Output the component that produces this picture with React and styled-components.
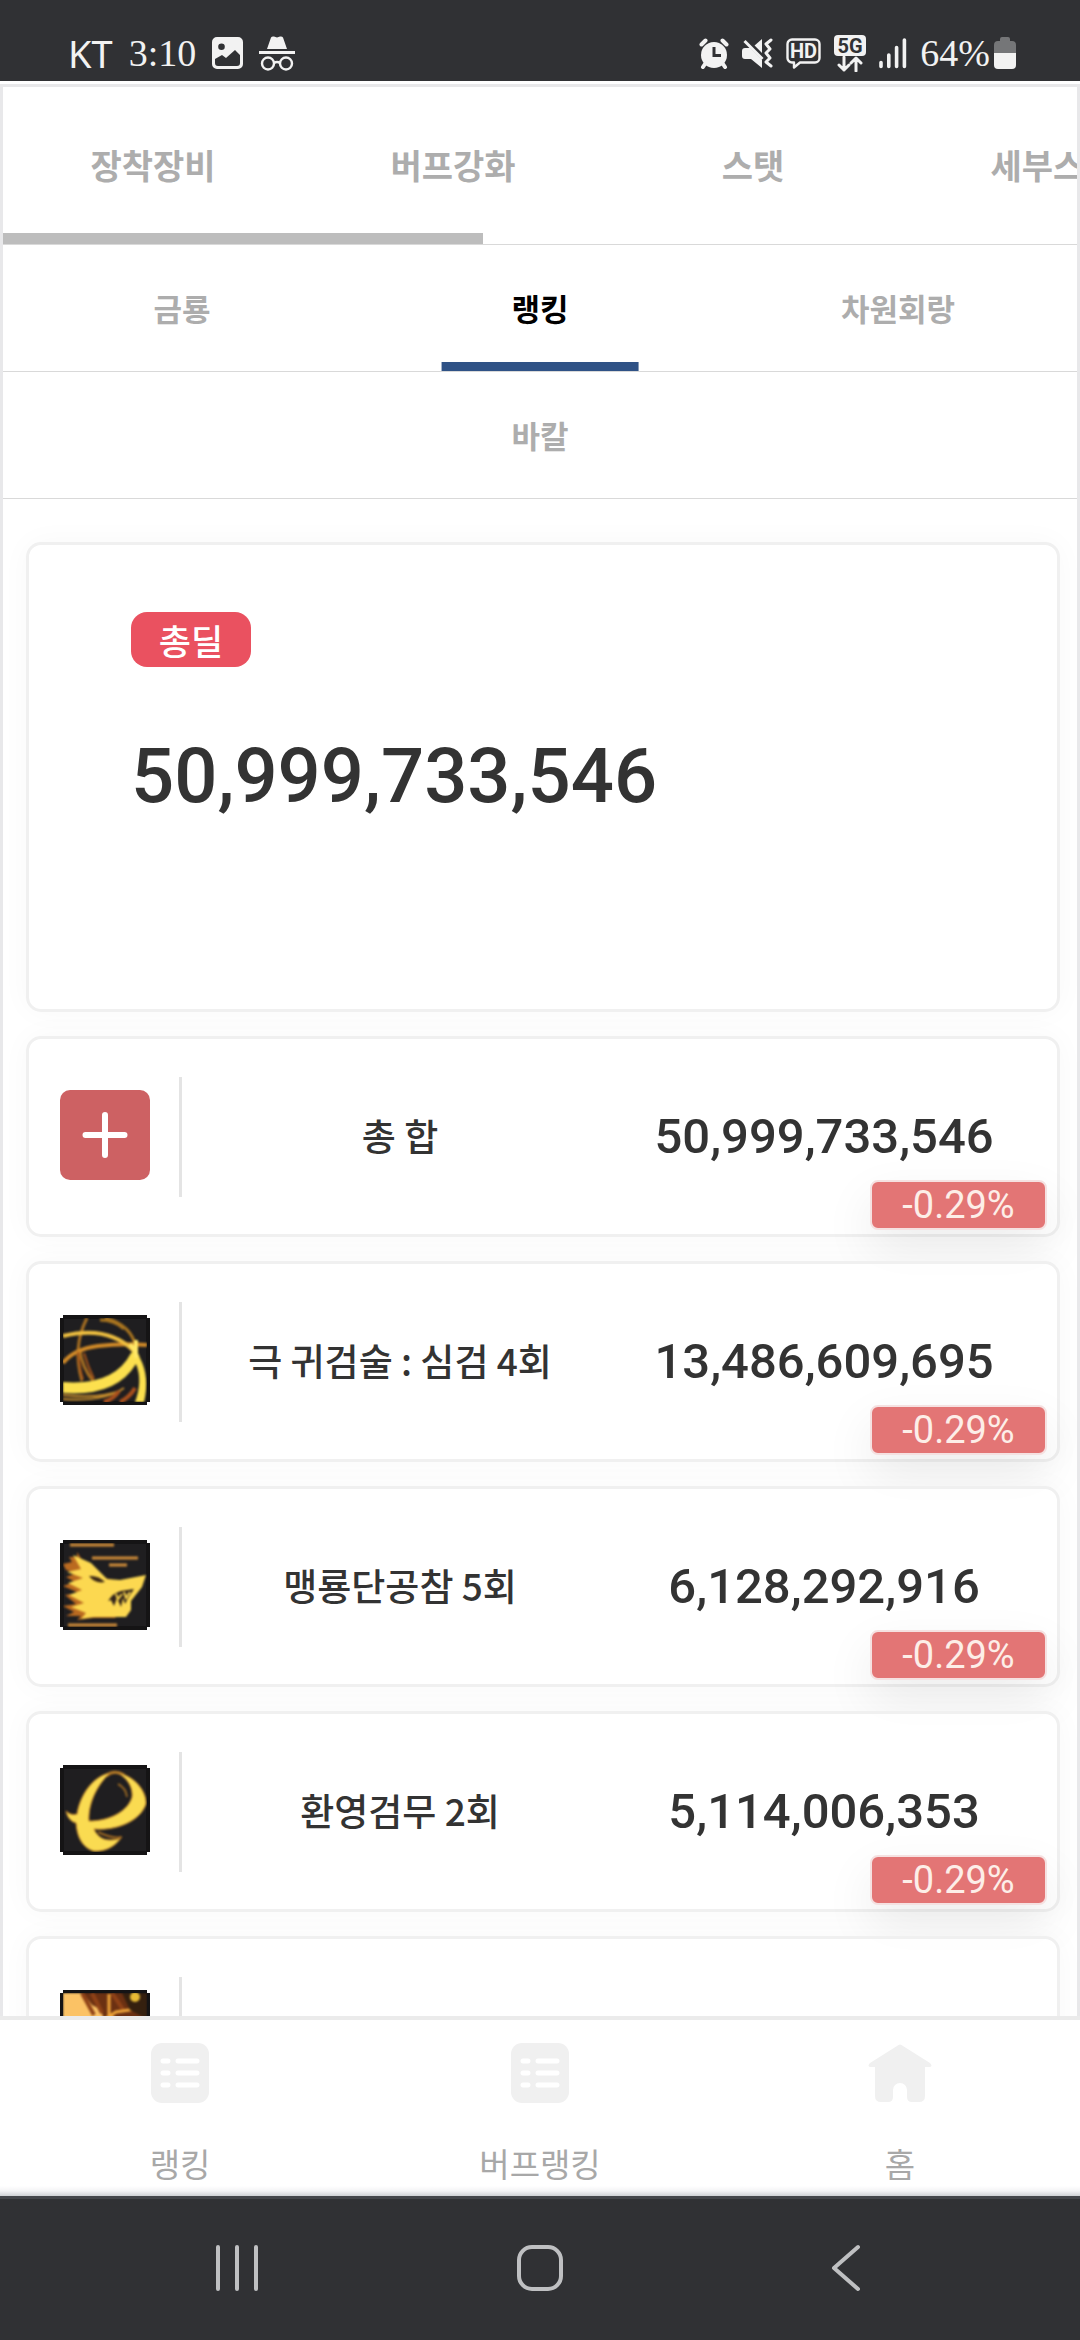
import React from 'react';
import styled, { createGlobalStyle } from 'styled-components';

const GlobalStyle = createGlobalStyle`
  * {
    box-sizing: border-box;
  }

  body {
    margin: 0;
    background: #fff;
    color: #333;
    font-family: 'Noto Sans CJK KR', sans-serif;
  }
`;

const Screen = styled.div`
  display: flex;
  flex-direction: column;
  height: 100vh;
`;

const StatusBar = styled.header`
  flex: none;
  display: flex;
  justify-content: space-between;
  align-items: flex-end;
  height: 81px;
  padding: 0 64px 9px 68px;
  background: #303134;
  color: #f2f2f2;
`;

const StatusGroup = styled.div`
  display: flex;
  align-items: center;
  height: 38px;
  gap: ${({ $gap }) => $gap}px;

  svg {
    display: block;
    flex: none;
  }
`;

const Carrier = styled.span`
  font-family: 'Noto Sans', sans-serif;
  font-size: 38px;
  line-height: 38px;
`;

const StatusText = styled.span`
  font-family: 'Liberation Serif', serif;
  font-size: 38px;
  line-height: 38px;
`;

const Page = styled.main`
  flex: 1;
  min-height: 0;
  display: flex;
  flex-direction: column;
  overflow: hidden;
  border: 3px solid #e8e8ea;
  border-bottom: none;
  margin-top: 3px;
`;

const TabStrip = styled.nav`
  flex: none;
  position: relative;
  display: flex;
  overflow: hidden;
  height: 158px;
  border-bottom: 1px solid #d9d9d9;
`;

const ScrollThumb = styled.span`
  position: absolute;
  left: 0;
  bottom: 0;
  width: 480px;
  height: 11px;
  background: #bdbdbd;
`;

const MainTab = styled.button`
  flex: none;
  width: 300px;
  padding: 0 0 2px;
  border: none;
  background: none;
  color: #adadad;
  font-family: inherit;
  font-size: 34px;
  font-weight: 700;
  cursor: pointer;
`;

const SubTabs = styled.nav`
  flex: none;
  display: flex;
  justify-content: center;
  border-bottom: 1px solid #d9d9d9;
`;

const SubTab = styled.button`
  position: relative;
  width: 33.33%;
  height: 126px;
  padding: 0 0 2px;
  border: none;
  background: none;
  color: ${({ $active }) => ($active ? '#000' : '#adadad')};
  font-family: inherit;
  font-size: 31px;
  font-weight: 700;
  cursor: pointer;

  &::after {
    content: '';
    position: absolute;
    left: 50%;
    bottom: 0;
    width: 55%;
    height: 9px;
    transform: translateX(-50%);
    background: ${({ $active }) => ($active ? '#2f5286' : 'transparent')};
  }
`;

const Content = styled.div`
  flex: 1;
  min-height: 0;
  overflow: hidden;
  display: flex;
  flex-direction: column;
  gap: 24px;
  padding: 43px 17px 0 23px;
`;

const SummaryCard = styled.section`
  flex: none;
  min-height: 470px;
  padding: 67px 102px;
  border: 3px solid #f0f0f0;
  border-radius: 15px;
  background: #fff;
  box-shadow: 0 0 30px rgba(0, 0, 0, 0.03);
`;

const SummaryLabel = styled.h1`
  display: flex;
  align-items: center;
  justify-content: center;
  width: 120px;
  height: 55px;
  margin: 0;
  border-radius: 16px;
  background: #ea5160;
  color: #fff;
  font-size: 35px;
  font-weight: 500;
  line-height: 55px;
`;

const SummaryValue = styled.p`
  margin: 64px 0 0;
  font-family: Roboto, sans-serif;
  font-size: 76px;
  font-weight: 500;
  line-height: 90px;
`;

const SkillList = styled.ul`
  flex: none;
  display: flex;
  flex-direction: column;
  gap: 24px;
  margin: 0;
  padding: 0;
  list-style: none;
`;

const SkillRow = styled.li`
  position: relative;
  display: grid;
  grid-template-columns: 150px 3px 18fr 17fr;
  align-items: center;
  justify-items: center;
  height: 201px;
  padding-right: 27px;
  border: 3px solid #f0f0f0;
  border-radius: 15px;
  background: rgba(255, 255, 255, 0.7);
  box-shadow: 0 0 30px rgba(0, 0, 0, 0.03);
`;

const SkillIcon = styled.div`
  justify-self: start;
  width: 90px;
  height: 90px;
  margin: 0 0 4px 31px;

  svg {
    display: block;
  }
`;

const SkillArt = styled.g`
  filter: blur(1px);
`;

const Divider = styled.div`
  width: 3px;
  height: 120px;
  background: #e4e4e4;
`;

const SkillName = styled.span`
  padding-bottom: 4px;
  font-size: 37px;
  font-weight: 500;
  white-space: nowrap;
`;

const SkillDamage = styled.span`
  font-family: Roboto, sans-serif;
  font-size: 49px;
  font-weight: 500;
  line-height: 56px;
`;

const DiffBadge = styled.span`
  position: absolute;
  right: 10px;
  bottom: 4px;
  display: flex;
  align-items: center;
  justify-content: center;
  width: 177px;
  height: 50px;
  border: 2px solid #f5e1e1;
  border-radius: 8px;
  background: #e37575;
  box-shadow: 0 20px 50px rgba(0, 0, 0, 0.08);
  color: #fdeee8;
  font-family: Roboto, sans-serif;
  font-size: 38px;
  line-height: 46px;
`;

const BottomNav = styled.nav`
  flex: none;
  display: grid;
  grid-template-columns: repeat(3, 1fr);
  height: 180px;
  border-top: 4px solid #ebebeb;
  background: linear-gradient(#fff, #fff 166px, #f3f3f5 171px, #cfd1d5 176px);
`;

const NavLink = styled.a`
  display: flex;
  flex-direction: column;
  align-items: center;
  gap: 36px;
  padding-top: 23px;
  color: #a8a8a8;
  font-size: 33px;
  line-height: 48px;
  text-decoration: none;
`;

const SystemBar = styled.footer`
  flex: none;
  display: flex;
  justify-content: space-between;
  align-items: center;
  height: 144px;
  padding: 0 214px 4px;
  border-top: 3px solid #44464b;
  background: #303134;
`;

const SystemButton = styled.button`
  width: 48px;
  height: 48px;
  padding: 0;
  border: none;
  background: none;
  cursor: pointer;

  svg {
    display: block;
    fill: none;
    stroke: #bfc0c2;
    stroke-width: 4;
    stroke-linecap: round;
    stroke-linejoin: round;
  }
`;

const ImageIcon = () => (
  <svg width="31" height="32" viewBox="0 0 31 32">
    <path
      fill="#f2f2f2"
      fillRule="evenodd"
      d="M5 0h21a5 5 0 0 1 5 5v22a5 5 0 0 1-5 5H5a5 5 0 0 1-5-5V5a5 5 0 0 1 5-5zM9.500 6.500a3.300 3.300 0 1 0 0 6.600a3.300 3.300 0 0 0 0-6.600zM3 22v4a3 3 0 0 0 3 3h19a3 3 0 0 0 3-3v-8l-5-5l-9 8l-4-3z"
    />
  </svg>
);

const IncognitoIcon = () => (
  <svg width="36" height="35" viewBox="0 0 36 35" fill="none" stroke="#f2f2f2">
    <path fill="#f2f2f2" stroke="none" d="M12 1.500Q13 0 15 .5l3 1l3-1q2-.5 3 1L28 13H8z" />
    <path strokeWidth="3" d="M0 16.500h36" />
    <circle cx="9" cy="27.500" r="6" strokeWidth="2.400" />
    <circle cx="27" cy="27.500" r="6" strokeWidth="2.400" />
    <path strokeWidth="2.400" d="M15 27q3-2 6 0" />
  </svg>
);

const AlarmIcon = () => (
  <svg width="30" height="31" viewBox="0 0 30 31">
    <circle cx="15" cy="17" r="13" fill="#f2f2f2" />
    <g fill="none" strokeLinecap="round" stroke="#f2f2f2" strokeWidth="4">
      <path d="M2.500 6.500l4-4M27.500 6.500l-4-4M6 26l-2 3M24 26l2 3" />
    </g>
    <path d="M15 9v8.500h7" fill="none" stroke="#303134" strokeWidth="3" />
  </svg>
);

const MuteIcon = () => (
  <svg width="31" height="31" viewBox="0 0 31 31" fill="none">
    <path fill="#f2f2f2" d="M12 8l8-7v15zM0 13q0-3 3-3h5l12 12v8L9 21H3q-3 0-3-3z" />
    <path d="M4 1l17 17" stroke="#303134" strokeWidth="3" />
    <path d="M2.500 3l18 18" stroke="#f2f2f2" strokeWidth="3" />
    <path
      d="M29 2l-5 4l4 5l-4 4l4 5l-4 4l5 4"
      stroke="#f2f2f2"
      strokeWidth="3"
      strokeLinecap="round"
      strokeLinejoin="round"
    />
  </svg>
);

const HdIcon = () => (
  <svg width="35" height="31" viewBox="0 0 35 31" fill="none" stroke="#f2f2f2">
    <path
      strokeWidth="2.400"
      strokeLinejoin="round"
      d="M6 1.500h23a4.500 4.500 0 0 1 4.500 4.500v14a4.500 4.500 0 0 1-4.500 4.500H14l-6 5v-5H6A4.500 4.500 0 0 1 1.500 20V6A4.500 4.500 0 0 1 6 1.500z"
    />
    <text x="17.500" y="20" fill="#f2f2f2" stroke="none" fontFamily="Roboto, sans-serif" fontSize="20" fontWeight="700" textAnchor="middle">
      HD
    </text>
  </svg>
);

const FiveGIcon = () => (
  <svg width="32" height="37" viewBox="0 0 32 37">
    <rect width="32" height="21" rx="4" fill="#f2f2f2" />
    <text x="16" y="17.500" fill="#303134" fontFamily="Roboto, sans-serif" fontSize="20" fontWeight="700" textAnchor="middle">
      5G
    </text>
    <path
      d="M10 22v13M5 30l5 5l5-5M22 36V24M17 28l5-5l5 5"
      fill="none"
      stroke="#f2f2f2"
      strokeWidth="3"
      strokeLinecap="round"
      strokeLinejoin="round"
    />
  </svg>
);

const SignalIcon = () => (
  <svg width="28" height="31" viewBox="0 0 28 31">
    <path
      d="M2 24.500v4M9.800 17v11.500M17.600 9.500v19M25.400 2v26.500"
      fill="none"
      stroke="#f2f2f2"
      strokeWidth="3.600"
      strokeLinecap="round"
    />
  </svg>
);

const BatteryIcon = () => (
  <svg width="22" height="32" viewBox="0 0 22 32">
    <path d="M6 4V2q0-2 2-2h6q2 0 2 2v2h2q4 0 4 4v8H0V8q0-4 4-4z" fill="#757678" />
    <path d="M0 16h22v12q0 4-4 4H4q-4 0-4-4z" fill="#f2f2f2" />
  </svg>
);

const PlusIcon = () => (
  <svg width="90" height="90" viewBox="0 0 90 90">
    <rect width="90" height="90" rx="10" fill="#cd6163" />
    <path d="M45 25v40M25.500 45h39" stroke="#fff" strokeWidth="6" strokeLinecap="round" />
  </svg>
);

const SkillFrame = ({ children }) => (
  <svg width="90" height="90" viewBox="0 0 90 90">
    <path d="M3 0h84v3h3v84h-3v3H3v-3H0V3h3z" fill="#151415" />
    <rect x="4" y="4" width="82" height="82" fill="#1f1e20" />
    <svg x="3" y="3" width="84" height="84" viewBox="3 3 84 84" fill="none">
      <SkillArt>{children}</SkillArt>
    </svg>
  </svg>
);

const HeartSwordIcon = () => (
  <SkillFrame>
    <path d="M27 3Q12 32 22 66M20 36Q22 52 33 66" stroke="#a87022" strokeWidth="3" />
    <path d="M45 3Q72 10 76 33M40 5Q55 5 64 14" stroke="#a8741f" strokeWidth="3" />
    <path d="M3 48Q14 34 38 31T87 30" stroke="#d18a28" strokeWidth="4" />
    <path d="M3 21Q48 10 74 36" stroke="#f0c040" strokeWidth="4" />
    <path d="M18 37Q20 56 23 64M24 38Q28 52 34 64" stroke="#a4531a" strokeWidth="2" />
    <path d="M3 67Q54 71 71 38Q77 32 80 43Q90 62 84 87H75Q83 66 76 49Q56 82 3 78z" fill="#fce04e" />
    <path d="M3 84Q44 87 64 73M3 80Q38 84 60 76" stroke="#c58c2c" strokeWidth="2" />
    <path d="M44 87Q54 84 59 76M60 87Q70 82 75 73" stroke="#a9501d" strokeWidth="4" />
    <path d="M70 29l6 8M76 25v18" stroke="#ffe867" strokeWidth="4" />
  </SkillFrame>
);

const WolfIcon = () => (
  <SkillFrame>
    <path d="M10 5H54M32 18H78M49 25H67M8 85H57" stroke="#d08c38" strokeWidth="3" />
    <path
      d="M3 24l9-2l-3-5l8 0l0-5l5 8l9 4l14 14l12 3l20-2l-6 11l-10 11l1 10l-7 7H33L17 80l4-4L6 76l8-4L3 66l13-2L5 55l14-2L3 46l12-4L6 37l11-4L6 30z"
      fill="#ba6a20"
    />
    <path
      d="M13 15l9 4l9 4l16 16l13 1l26-5l-4 12l-11 14v9l-5 7H34l-13 2l5-6l-15-6l13-4l-15-8l13-5l-14-7l15-5l-16-6l14-3z"
      fill="#fcd850"
    />
    <path d="M29 36q9-1 16 6q-10 2-16-6z" fill="#3a2715" />
    <path d="M48 61q5-8 13-10l13-2l-6 9l-3 6l-2-6l-2 9l-4-9l-3 8l-3-6z" fill="#30221a" />
    <path d="M56 54l2 5l4-5M64 52l2 6l4-6" stroke="#fcd850" strokeWidth="2" />
  </SkillFrame>
);

const CrescentIcon = () => (
  <SkillFrame>
    <path
      d="M46 11Q54 4 64 10"
      stroke="#b57a26"
      strokeWidth="3"
    />
    <path
      d="M6 46Q11 51 17 49C20 30 33 11 50 8C36 21 28 40 29 56C50 56 68 46 72 32C73 22 67 13 58 8C75 11 87 27 86 39C80 57 55 66 34 64C38 73 46 78 61 73C53 84 42 87 33 86C22 82 17 72 16 58Q8 56 6 46z"
      fill="#fadb51"
      stroke="#c4842a"
      strokeWidth="1"
    />
    <path d="M58 19q8 4 9 13" stroke="#8f6222" strokeWidth="2" />
    <path d="M38 67q14 7 24 5" stroke="#9c6722" strokeWidth="2" />
  </SkillFrame>
);

const FlareIcon = () => (
  <SkillFrame>
    <rect x="3" y="3" width="84" height="84" fill="#6b3012" />
    <path d="M3 3h20l9 12l8 4l5 12l12 4v52H3z" fill="#fbc265" />
    <path d="M22 3l12 22M32 3l10 20M52 3l12 18" stroke="#8f4217" strokeWidth="4" />
    <path d="M49 4v40M34 36l22-14l20-3M49 24l12 12" stroke="#f0a63a" strokeWidth="3" />
    <path d="M62 3h25v26L70 20z" fill="#35200f" />
    <circle cx="75" cy="7" r="5" fill="#e8bb35" />
  </SkillFrame>
);

const ListIcon = () => (
  <svg width="58" height="60" viewBox="0 0 58 60">
    <rect width="58" height="60" rx="11" fill="#f0f0f0" />
    <path
      d="M12 18h5M27 18h19M12 30h5M27 30h19M12 42h5M27 42h19"
      stroke="#fff"
      strokeWidth="5"
      strokeLinecap="round"
    />
  </svg>
);

const HomeIcon = () => (
  <svg width="64" height="60" viewBox="0 0 64 60">
    <path
      d="M29 3q3-3 6 0l27 17q3 3 0 4h-5v29q0 6-6 6h-7q-5 0-5-5v-7a7 7 0 0 0-14 0v7q0 5-5 5h-7q-6 0-6-6V24H2q-3-1 0-4z"
      fill="#f0f0f0"
    />
  </svg>
);

const mainTabs = ['장착장비', '버프강화', '스탯', '세부스탯'];
const subTabRows = [['금룡', '랭킹', '차원회랑'], ['바칼']];

const skills = [
  { Icon: PlusIcon, name: '총 합', damage: '50,999,733,546', diff: '-0.29%' },
  { Icon: HeartSwordIcon, name: '극 귀검술 : 심검 4회', damage: '13,486,609,695', diff: '-0.29%' },
  { Icon: WolfIcon, name: '맹룡단공참 5회', damage: '6,128,292,916', diff: '-0.29%' },
  { Icon: CrescentIcon, name: '환영검무 2회', damage: '5,114,006,353', diff: '-0.29%' },
  { Icon: FlareIcon },
];

const navItems = [
  { Icon: ListIcon, label: '랭킹' },
  { Icon: ListIcon, label: '버프랭킹' },
  { Icon: HomeIcon, label: '홈' },
];

const App = () => {
  const [activeTab, setActiveTab] = React.useState('랭킹');

  return (
    <>
      <GlobalStyle />
      <Screen>
        <StatusBar>
          <StatusGroup $gap={16}>
            <Carrier>KT</Carrier>
            <StatusText>3:10</StatusText>
            <ImageIcon />
            <IncognitoIcon />
          </StatusGroup>
          <StatusGroup $gap={13}>
            <AlarmIcon />
            <MuteIcon />
            <HdIcon />
            <FiveGIcon />
            <SignalIcon />
            <StatusGroup $gap={4}>
              <StatusText>64%</StatusText>
              <BatteryIcon />
            </StatusGroup>
          </StatusGroup>
        </StatusBar>

        <Page>
          <TabStrip>
            {mainTabs.map(tab => (
              <MainTab key={tab} type="button">{tab}</MainTab>
            ))}
            <ScrollThumb />
          </TabStrip>
          {subTabRows.map(row => (
            <SubTabs key={row[0]}>
              {row.map(tab => (
                <SubTab
                  key={tab}
                  type="button"
                  $active={tab === activeTab}
                  onClick={() => setActiveTab(tab)}
                >
                  {tab}
                </SubTab>
              ))}
            </SubTabs>
          ))}

          <Content>
            <SummaryCard>
              <SummaryLabel>총딜</SummaryLabel>
              <SummaryValue>50,999,733,546</SummaryValue>
            </SummaryCard>
            <SkillList>
              {skills.map(({ Icon, name, damage, diff }, index) => (
                <SkillRow key={index}>
                  <SkillIcon><Icon /></SkillIcon>
                  <Divider />
                  {name && <SkillName>{name}</SkillName>}
                  {damage && <SkillDamage>{damage}</SkillDamage>}
                  {diff && <DiffBadge>{diff}</DiffBadge>}
                </SkillRow>
              ))}
            </SkillList>
          </Content>
        </Page>

        <BottomNav>
          {navItems.map(({ Icon, label }) => (
            <NavLink key={label} href="#">
              <Icon />
              {label}
            </NavLink>
          ))}
        </BottomNav>

        <SystemBar>
          <SystemButton type="button" aria-label="최근 앱">
            <svg width="48" height="48" viewBox="0 0 48 48"><path d="M4 3v42M23 3v42M42 3v42" /></svg>
          </SystemButton>
          <SystemButton type="button" aria-label="홈 화면">
            <svg width="48" height="48" viewBox="0 0 48 48"><rect x="3" y="3" width="42" height="42" rx="13" /></svg>
          </SystemButton>
          <SystemButton type="button" aria-label="뒤로">
            <svg width="48" height="48" viewBox="0 0 48 48"><path d="M40 3L16 24l24 21" /></svg>
          </SystemButton>
        </SystemBar>
      </Screen>
    </>
  );
};

export default App;
